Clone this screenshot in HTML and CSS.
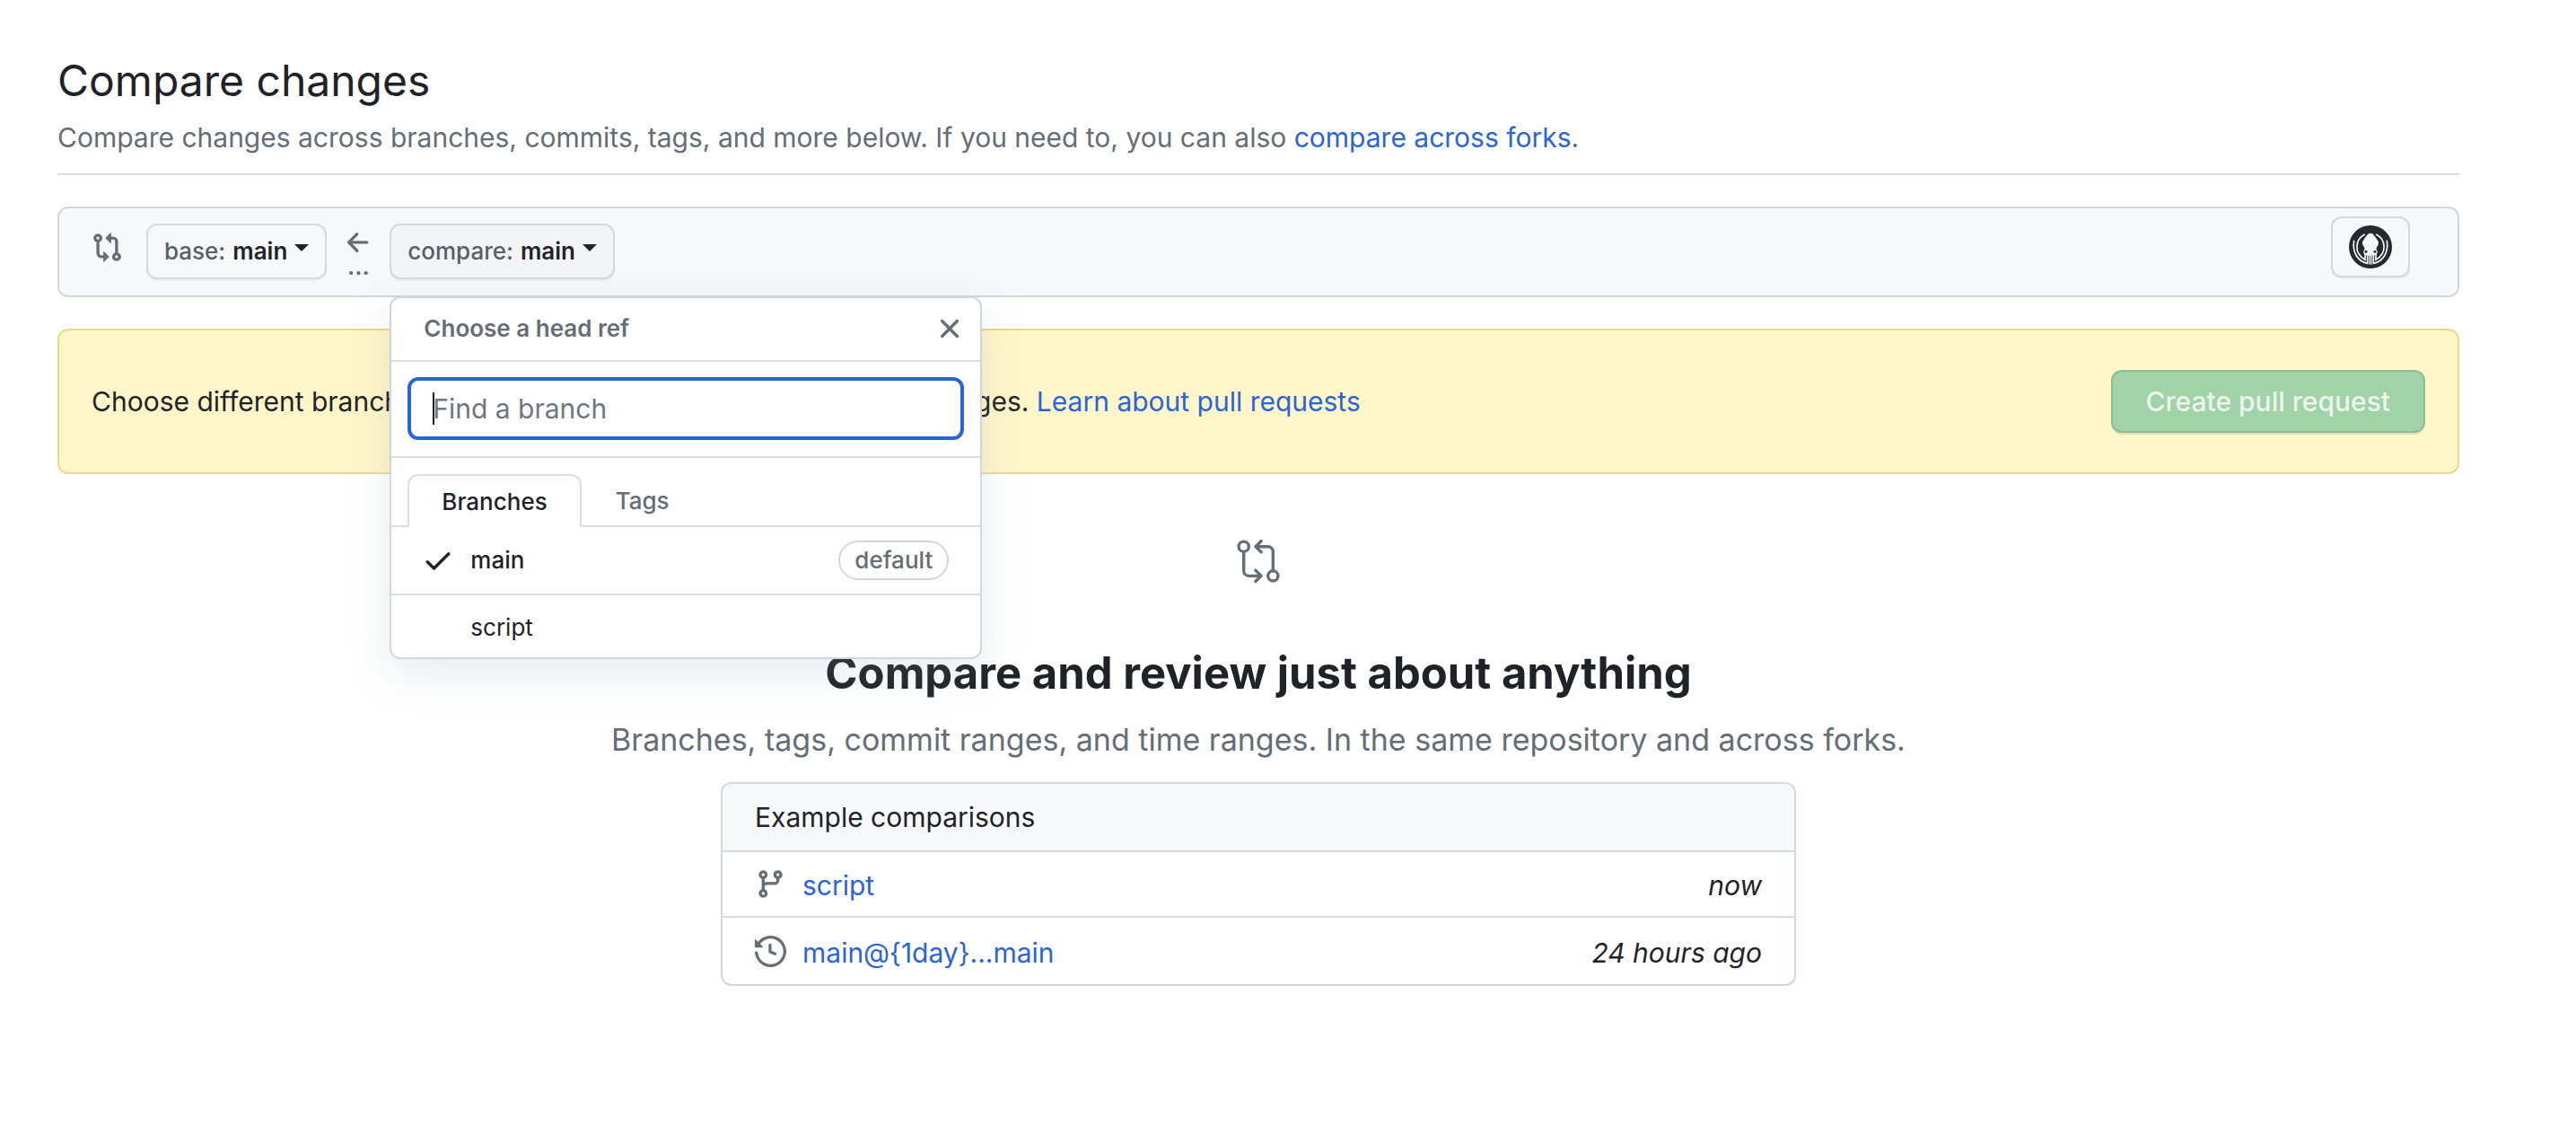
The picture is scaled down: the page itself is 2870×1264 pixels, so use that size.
FILE: index.html
```html
<!DOCTYPE html>
<html lang="en">
<head>
  <meta charset="utf-8">
  <meta name="viewport" content="width=device-width, initial-scale=1">
  <title>Compare changes</title>
  <link rel="stylesheet" href="styles.css">
</head>
<body>
  <main class="page">
    <header class="page-header">
      <h1 class="page-title">Compare changes</h1>
      <p class="page-lead">Compare changes across branches, commits, tags, and more below. If you need to, you can also <a class="link" href="#forks">compare across forks</a>.</p>
    </header>

    <section class="range" aria-label="Comparison range">
      <svg class="icon range-icon" viewBox="0 0 16 16" aria-hidden="true"><path d="M9.573.677A.25.25 0 0 1 10 .854V2.5h1A2.5 2.5 0 0 1 13.5 5v5.628a2.251 2.251 0 1 1-1.5 0V5a1 1 0 0 0-1-1h-1v1.646a.25.25 0 0 1-.427.177L7.177 3.427a.25.25 0 0 1 0-.354ZM6 12v-1.646a.25.25 0 0 1 .427-.177l2.396 2.396a.25.25 0 0 1 0 .354l-2.396 2.396A.25.25 0 0 1 6 15.146V13.5H5A2.5 2.5 0 0 1 2.5 11V5.372a2.25 2.25 0 1 1 1.5 0V11a1 1 0 0 0 1 1ZM4 3.25a.75.75 0 1 0-1.5 0 .75.75 0 0 0 1.5 0ZM12.75 12a.75.75 0 1 0 0 1.5.75.75 0 0 0 0-1.5Z"/></svg>
      <button class="btn" type="button"><span class="btn-key">base:</span><span class="btn-value">main</span><span class="caret"></span></button>
      <div class="range-dir">
        <svg class="icon dir-arrow" viewBox="0 0 16 16" aria-hidden="true"><path d="M7.78 12.53a.75.75 0 0 1-1.06 0L2.47 8.28a.75.75 0 0 1 0-1.06l4.25-4.25a.751.751 0 0 1 1.042.018.751.751 0 0 1 .018 1.042L4.81 7h7.44a.75.75 0 0 1 0 1.5H4.81l2.97 2.97a.75.75 0 0 1 0 1.06Z"/></svg>
        <span class="dir-dots">...</span>
      </div>
      <div class="picker">
        <button class="btn btn-active" type="button" aria-expanded="true"><span class="btn-key">compare:</span><span class="btn-value">main</span><span class="caret"></span></button>
        <div class="menu" role="dialog" aria-label="Choose a head ref">
          <div class="menu-header">
            <span class="menu-title">Choose a head ref</span>
            <button class="menu-close" type="button" aria-label="Close">
              <svg class="icon" viewBox="0 0 16 16" aria-hidden="true"><path d="M3.72 3.72a.75.75 0 0 1 1.06 0L8 6.94l3.22-3.22a.749.749 0 0 1 1.275.326.749.749 0 0 1-.215.734L9.06 8l3.22 3.22a.749.749 0 0 1-.326 1.275.749.749 0 0 1-.734-.215L8 9.06l-3.22 3.22a.751.751 0 0 1-1.042-.018.751.751 0 0 1-.018-1.042L6.94 8 3.72 4.78a.75.75 0 0 1 0-1.06Z"/></svg>
            </button>
          </div>
          <div class="menu-filter">
            <input class="filter-input" type="text" placeholder="Find a branch" aria-label="Find a branch">
            <span class="text-cursor"></span>
          </div>
          <div class="tabs" role="tablist">
            <button class="tab tab-selected" type="button" role="tab" aria-selected="true">Branches</button>
            <button class="tab" type="button" role="tab" aria-selected="false">Tags</button>
          </div>
          <div class="refs">
            <a class="ref ref-current" href="#main">
              <svg class="icon ref-check" viewBox="0 0 16 16" aria-hidden="true"><path d="M13.78 4.22a.75.75 0 0 1 0 1.06l-7.25 7.25a.75.75 0 0 1-1.06 0L2.22 9.28a.751.751 0 0 1 .018-1.042.751.751 0 0 1 1.042-.018L6 10.94l6.72-6.72a.75.75 0 0 1 1.06 0Z"/></svg>
              <span class="ref-name">main</span>
              <span class="ref-label">default</span>
            </a>
            <a class="ref" href="#script">
              <span class="ref-check"></span>
              <span class="ref-name">script</span>
            </a>
          </div>
        </div>
      </div>
      <button class="btn btn-kraken" type="button" aria-label="Open in GitKraken">
        <svg class="kraken" viewBox="0 0 144 144" aria-hidden="true">
          <circle cx="72" cy="72" r="72" fill="#24292f"/>
          <g fill="none" stroke="#f6f8fa" stroke-width="5" stroke-linecap="round">
            <path d="M17 52C11 88 28 120 62 127V98"/>
            <path d="M127 52c6 36-11 68-45 75V98"/>
            <path d="M52 31C22 46 14 92 54 115V98"/>
            <path d="M92 31c30 15 38 61-2 84V98"/>
            <path d="M69 98v31M75 98v31" stroke-width="4"/>
          </g>
          <path fill="#f6f8fa" d="M65 28Q72 25 79 28 91 41 98 53 101 60 97 67 90 75 92 81L96 88 93 97Q88 101 72 101T51 97L48 88 52 81Q54 75 47 67 43 60 46 53 53 41 65 28Z"/>
          <circle cx="57" cy="88" r="4.5" fill="#24292f"/>
          <circle cx="87" cy="88" r="4.5" fill="#24292f"/>
        </svg>
      </button>
    </section>

    <section class="notice">
      <p class="notice-text">Choose different branches or forks above to discuss and review changes. <a class="link" href="#learn">Learn about pull requests</a></p>
      <button class="btn-create" type="button" disabled>Create pull request</button>
    </section>

    <section class="blank">
      <svg class="icon blank-icon" viewBox="0 0 24 24" aria-hidden="true">
        <g fill="none" stroke="currentColor" stroke-width="1.5" stroke-linecap="round" stroke-linejoin="round">
          <circle cx="4.75" cy="4.75" r="2.5"/><circle cx="19.25" cy="19.25" r="2.5"/>
          <path d="M4.75 7.5v9.25a2.5 2.5 0 0 0 2.5 2.5h5.5M10.6 16.5l2.75 2.75-2.75 2.75M19.25 16.5V7.25a2.5 2.5 0 0 0-2.5-2.5h-5.5M13.4 2l-2.75 2.75 2.75 2.75"/>
        </g>
      </svg>
      <h2 class="blank-title">Compare and review just about anything</h2>
      <p class="blank-lead">Branches, tags, commit ranges, and time ranges. In the same repository and across forks.</p>
      <div class="examples">
        <h3 class="examples-title">Example comparisons</h3>
        <ul class="examples-list">
          <li class="example">
            <svg class="icon example-icon" viewBox="0 0 16 16" aria-hidden="true"><path d="M9.5 3.25a2.25 2.25 0 1 1 3 2.122V6A2.5 2.5 0 0 1 10 8.5H6a1 1 0 0 0-1 1v1.128a2.251 2.251 0 1 1-1.5 0V5.372a2.25 2.25 0 1 1 1.5 0v1.836A2.493 2.493 0 0 1 6 7h4a1 1 0 0 0 1-1v-.628A2.25 2.25 0 0 1 9.5 3.25Zm-6 0a.75.75 0 1 0 1.5 0 .75.75 0 0 0-1.5 0Zm8.25-.75a.75.75 0 1 0 0 1.5.75.75 0 0 0 0-1.5ZM4.25 12a.75.75 0 1 0 0 1.5.75.75 0 0 0 0-1.5Z"/></svg>
            <a class="link example-text" href="#example-script">script</a>
            <em class="example-text example-time">now</em>
          </li>
          <li class="example">
            <svg class="icon example-icon" viewBox="0 0 16 16" aria-hidden="true"><path d="m.427 1.927 1.215 1.215a8.002 8.002 0 1 1-1.6 5.685.75.75 0 1 1 1.493-.154 6.5 6.5 0 1 0 1.18-4.458l1.358 1.358A.25.25 0 0 1 3.896 6H.25A.25.25 0 0 1 0 5.75V2.104a.25.25 0 0 1 .427-.177ZM7.75 4a.75.75 0 0 1 .75.75v2.992l2.028.812a.75.75 0 0 1-.557 1.392l-2.5-1A.751.751 0 0 1 7 8.25v-3.5A.75.75 0 0 1 7.75 4Z"/></svg>
            <a class="link example-text" href="#example-day">main@{1day}...main</a>
            <em class="example-text example-time">24 hours ago</em>
          </li>
        </ul>
      </div>
    </section>
  </main>
</body>
</html>
```
FILE: styles.css
```css
* { box-sizing: border-box; }

:root {
  --ink: #1f2328;
  --muted: #656d76;
  --link: #2b64d6;
  --line: #d0d7de;
  --soft: #d8dee4;
  --canvas: #f6f8fa;
}

body {
  margin: 0;
  background: #fff;
  color: var(--ink);
  font-family: Inter, "Liberation Sans", sans-serif;
  font-size: 30px;
  line-height: 46px;
}

h1, h2, h3, p, ul { margin: 0; padding: 0; }
ul { list-style: none; }
button, input { font-family: inherit; margin: 0; }

.link { color: var(--link); text-decoration: none; }
.icon { display: block; flex: none; fill: currentColor; color: var(--muted); }

.page { padding: 58px 130px 80px 64px; }

.page-header {
  display: flex;
  flex-direction: column;
  gap: 8px;
  padding-bottom: 17px;
  border-bottom: 2px solid var(--soft);
}
.page-title { font-size: 48px; font-weight: 400; line-height: 64px; }
.page-lead { color: var(--muted); }

.range {
  display: flex;
  align-items: flex-start;
  margin-top: 35px;
  padding: 17px 53px 18px 36px;
  border: 2px solid var(--line);
  border-radius: 12px;
  background: var(--canvas);
}
.range-icon { width: 35px; height: 35px; margin: 9px 26px 0 0; }

.btn {
  display: flex;
  align-items: center;
  gap: 8px;
  height: 62px;
  padding: 0 18px;
  border: 2px solid #d5d8da;
  border-radius: 12px;
  background: var(--canvas);
  box-shadow: 0 2px 0 rgba(31, 35, 40, 0.04);
  color: var(--ink);
  font-size: 26px;
  font-weight: 500;
  line-height: 40px;
}
.btn-active { background: #f3f4f6; }
.btn-key { color: #57606a; }
.btn-value { font-weight: 600; }
.caret {
  margin-bottom: 8px;
  border: 8px solid transparent;
  border-top-color: currentColor;
  border-bottom: 0;
}

.range-dir {
  display: flex;
  flex-direction: column;
  align-items: center;
  width: 70px;
}
.dir-arrow { width: 35px; height: 35px; margin-top: 4px; }
.dir-dots { color: var(--muted); font-size: 26px; font-weight: 600; line-height: 18px; }

.picker { position: relative; }
.menu {
  position: absolute;
  z-index: 10;
  top: 81px;
  left: 0;
  width: 660px;
  border: 2px solid var(--line);
  border-radius: 12px;
  background: #fff;
  box-shadow: 0 16px 48px rgba(140, 149, 159, 0.2);
  font-size: 26px;
  line-height: 40px;
}
.menu-header {
  display: flex;
  align-items: center;
  justify-content: space-between;
  height: 71px;
  padding: 0 16px 2px 36px;
  border-bottom: 2px solid var(--soft);
}
.menu-title { color: var(--muted); font-weight: 600; }
.menu-close {
  width: 36px;
  height: 36px;
  padding: 0;
  border: 0;
  background: none;
}
.menu-filter {
  position: relative;
  padding: 17px 18px 18px;
  border-bottom: 2px solid var(--soft);
}
.filter-input {
  display: block;
  width: 100%;
  height: 70px;
  padding: 0 24px;
  border: 4px solid var(--link);
  border-radius: 12px;
  background: #fff;
  color: var(--ink);
  font-size: 30px;
}
.filter-input:focus { outline: 0; }
.filter-input::placeholder { color: #6e7781; opacity: 1; }
.text-cursor {
  position: absolute;
  top: 34px;
  left: 46px;
  width: 2px;
  height: 36px;
  background: var(--ink);
}
.tabs {
  display: flex;
  padding: 18px 18px 0;
  border-bottom: 2px solid var(--soft);
}
.tab {
  height: 57px;
  padding: 0 36px;
  border: 2px solid transparent;
  border-bottom: 0;
  background: none;
  color: var(--muted);
  font-size: 26px;
  font-weight: 500;
  line-height: 40px;
}
.tab-selected {
  height: 59px;
  margin-bottom: -2px;
  border-color: var(--soft);
  border-radius: 12px 12px 0 0;
  background: #fff;
  color: var(--ink);
}
.ref {
  display: flex;
  align-items: center;
  height: 74px;
  padding: 0 35px 0 34px;
  color: var(--ink);
  text-decoration: none;
}
.ref-current { font-weight: 500; }
.ref + .ref { height: 71px; padding-top: 2px; border-top: 2px solid var(--soft); }
.ref-check { width: 36px; height: 36px; margin-right: 18px; color: var(--ink); }
.ref-label {
  margin-left: auto;
  padding: 0 16px;
  border: 2px solid var(--line);
  border-radius: 22px;
  color: var(--muted);
}

.btn-kraken { height: 68px; margin: -8px 0 0 auto; }
.kraken { display: block; width: 48px; height: 48px; }

.notice {
  display: flex;
  align-items: center;
  justify-content: space-between;
  margin-top: 35px;
  padding: 44px 36px;
  border: 2px solid #ebd88a;
  border-radius: 12px;
  background: #fff6c9;
}
.btn-create {
  height: 70px;
  padding: 0 37px;
  border: 2px solid #8dbb93;
  border-radius: 12px;
  background: #a2d2a7;
  box-shadow: 0 2px 0 rgba(31, 35, 40, 0.1);
  color: #ebf6ed;
  font-size: 30px;
  font-weight: 500;
}

.blank {
  display: flex;
  flex-direction: column;
  align-items: center;
  padding-top: 70px;
}
.blank-icon { width: 54px; height: 54px; }
.blank-title { margin-top: 66px; font-size: 49px; font-weight: 700; line-height: 64px; }
.blank-lead { margin-top: 17px; color: var(--muted); font-size: 34px; line-height: 50px; }

.examples {
  width: 1198px;
  max-width: 100%;
  margin-top: 22px;
  border: 2px solid var(--line);
  border-radius: 12px;
}
.examples-title {
  padding: 14px 36px;
  border-bottom: 2px solid var(--line);
  border-radius: 10px 10px 0 0;
  background: var(--canvas);
  font-size: 30px;
  font-weight: 400;
}
.example {
  display: flex;
  align-items: center;
  height: 71px;
  padding: 0 36px;
}
.example + .example { height: 76px; border-top: 2px solid var(--soft); }
.example-icon { width: 35px; height: 35px; margin-right: 18px; }
.example-text { padding-top: 3px; }
.example-time { margin-left: auto; }
```
